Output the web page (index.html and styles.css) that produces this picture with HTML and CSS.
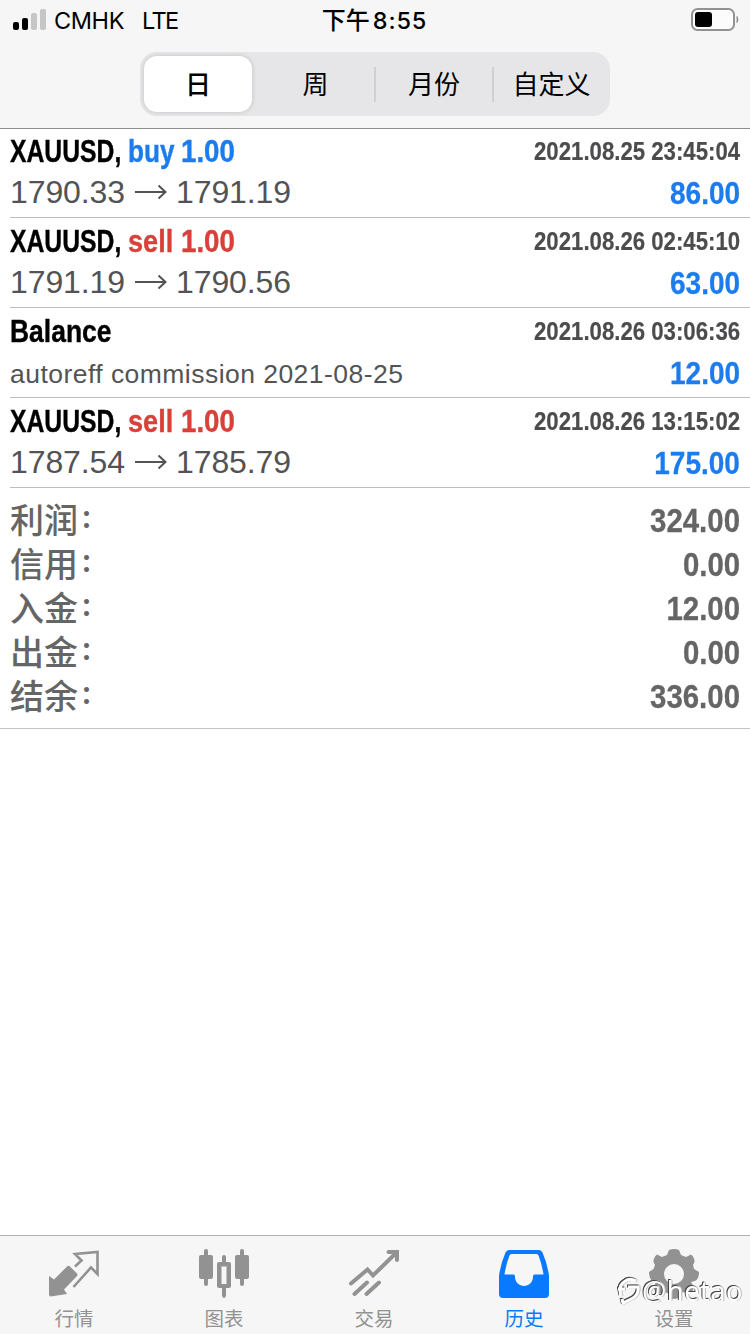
FILE: index.html
```html
<!DOCTYPE html>
<html lang="zh-CN">
<head>
<meta charset="utf-8">
<title>历史</title>
<link rel="stylesheet" href="styles.css">
</head>
<body>
<div class="screen">
  <header class="top">
    <div class="status">
      <div class="carrier">
        <svg class="signal" width="33" height="22" viewBox="0 0 33 22"><rect x="0" y="13" width="6" height="8" rx="2"/><rect x="9" y="9" width="6" height="12" rx="2"/><g fill="#c6c6c6"><rect x="18" y="4" width="6" height="17" rx="2"/><rect x="27" y="0" width="6" height="21" rx="2"/></g></svg>
        <span class="operator">CMHK</span>
        <span class="network">LTE</span>
      </div>
      <div class="time"><span class="period">下午</span><span class="clock">8:55</span></div>
      <svg class="battery" width="48" height="24" viewBox="0 0 48 24"><rect x="1" y="1" width="42" height="21" rx="5.5" fill="#fcfcfc" stroke="#929292" stroke-width="2"/><rect x="4" y="4" width="17" height="15" rx="3"/><path d="M46 8.5q2 3 0 6z" fill="#929292" stroke="#929292"/></svg>
    </div>
    <nav class="segments">
      <span class="segment selected">日</span>
      <span class="segment">周</span>
      <span class="segment divided">月份</span>
      <span class="segment divided">自定义</span>
    </nav>
  </header>
  <main class="content">
    <section class="deals">
      <article class="deal">
        <div class="line"><div class="title"><span class="symbol">XAUUSD,</span><span class="side buy">buy</span><span class="volume buy">1.00</span></div><time class="date">2021.08.25 23:45:04</time></div>
        <div class="line second"><div class="prices">1790.33<svg class="arrow" viewBox="0 0 32 16"><path d="M0 8H30M23.500 1.500L30.500 8L23.500 14.500"/></svg>1791.19</div><span class="profit">86.00</span></div>
      </article>
      <article class="deal">
        <div class="line"><div class="title"><span class="symbol">XAUUSD,</span><span class="side sell">sell</span><span class="volume sell">1.00</span></div><time class="date">2021.08.26 02:45:10</time></div>
        <div class="line second"><div class="prices">1791.19<svg class="arrow" viewBox="0 0 32 16"><path d="M0 8H30M23.500 1.500L30.500 8L23.500 14.500"/></svg>1790.56</div><span class="profit">63.00</span></div>
      </article>
      <article class="deal">
        <div class="line"><div class="title"><span class="symbol balance">Balance</span></div><time class="date">2021.08.26 03:06:36</time></div>
        <div class="line second"><div class="comment">autoreff commission 2021-08-25</div><span class="profit">12.00</span></div>
      </article>
      <article class="deal">
        <div class="line"><div class="title"><span class="symbol">XAUUSD,</span><span class="side sell">sell</span><span class="volume sell">1.00</span></div><time class="date">2021.08.26 13:15:02</time></div>
        <div class="line second"><div class="prices">1787.54<svg class="arrow" viewBox="0 0 32 16"><path d="M0 8H30M23.500 1.500L30.500 8L23.500 14.500"/></svg>1785.79</div><span class="profit">175.00</span></div>
      </article>
    </section>
    <section class="summary">
      <div class="total"><span class="label">利润<span class="colon">：</span></span><span class="amount">324.00</span></div>
      <div class="total"><span class="label">信用<span class="colon">：</span></span><span class="amount">0.00</span></div>
      <div class="total"><span class="label">入金<span class="colon">：</span></span><span class="amount">12.00</span></div>
      <div class="total"><span class="label">出金<span class="colon">：</span></span><span class="amount">0.00</span></div>
      <div class="total"><span class="label">结余<span class="colon">：</span></span><span class="amount">336.00</span></div>
    </section>
  </main>
  <footer class="tabs">
    <div class="tab">
      <svg class="icon" viewBox="0 0 50 50"><path fill="currentColor" d="M0 27L5 30.500L18 17.500Q19.500 16 21 17.500L28 24.500Q29 26 28 27L15 40.500L18 45L1.500 47.500Q0 47 0 45.500Z"/><path fill="none" stroke="currentColor" stroke-width="2.600" d="M26 17.500L32.500 11.500L26 5L48.500 3V25L42 18.500L24.500 38"/></svg>
      <span>行情</span>
    </div>
    <div class="tab">
      <svg class="icon" viewBox="0 0 50 50" fill="currentColor"><rect x="0" y="6" width="14" height="24" rx="2"/><rect x="5" y="0" width="4" height="37" rx="2"/><rect x="36" y="6" width="14" height="24" rx="2"/><rect x="41" y="0" width="4" height="37" rx="2"/><path fill-rule="evenodd" d="M20 13H30Q32 13 32 15V37Q32 39 30 39H20Q18 39 18 37V15Q18 13 20 13ZM22.500 17.500V35H27.500V17.500Z"/><rect x="23" y="6" width="4" height="9" rx="2"/><path d="M23 38h4v9q-2 4-4 0z"/></svg>
      <span>图表</span>
    </div>
    <div class="tab">
      <svg class="icon" viewBox="0 0 50 50" fill="none" stroke="currentColor" stroke-width="4"><path stroke-linecap="round" d="M2 34.500L18.500 20.500L24 26.500L46 5M5.500 45L18 33.500M17.500 45L30 33.500"/><path stroke-linecap="round" d="M39.500 3H48V11"/></svg>
      <span>交易</span>
    </div>
    <div class="tab active">
      <svg class="icon" viewBox="0 0 50 50"><path fill="currentColor" fill-rule="evenodd" d="M10 1H40Q42.500 1 43.500 3.500Q48.500 15 50 27V45Q50 49 46 49H4Q0 49 0 45V27Q1.500 15 6.500 3.500Q7.500 1 10 1ZM12.500 5Q11 5 10.500 6.500Q7 15 5.500 25.500H14.500Q16 25.500 16 27.500C16 40 34 40 34 27.500Q34 25.500 35.500 25.500H44.500Q43 15 39.500 6.500Q39 5 37.500 5Z"/></svg>
      <span>历史</span>
    </div>
    <div class="tab">
      <svg class="icon" viewBox="0 0 50 50"><path fill="currentColor" fill-rule="evenodd" d="M20 1Q25 -1 30 1L32 6L37 8L42 5.500Q45.500 8 45.500 13L44 16L45 20L50 23Q50 30 46 32L42 33L45 38Q44 43 40 45L35 43L31 44L29 49Q25 51 20.500 49L18.500 44L14.500 43L9 45Q5 43 4.500 38L7 33L4 32Q0 30 0 23L4.500 20L6 16L4.500 13Q4.500 8 8 5.500L13 8L18 6ZM25 15A10 10 0 1 0 25 35A10 10 0 1 0 25 15Z"/></svg>
      <span>设置</span>
      <div class="watermark"><svg width="24" height="30" viewBox="0 0 24 30"><path d="M5 20Q2 10 8 6Q13 1 20 5M2 13H9M12 11H22Q23 18 17 22Q13 24 7 27L6 23"/></svg><b>@hetao</b></div>
    </div>
  </footer>
</div>
</body>
</html>
```
FILE: styles.css
```css
* { box-sizing: border-box; }
body { margin: 0; background: #fff; font-family: "Liberation Sans", "Noto Sans CJK SC", sans-serif; }
.screen { width: 750px; height: 1334px; display: flex; flex-direction: column; overflow: hidden; }
.top { height: 129px; background: #f6f6f6; border-bottom: 1px solid #8d8d8f; flex: none; }

.status { height: 40px; display: grid; grid-template-columns: 1fr auto 1fr; align-items: center; padding: 0 11px 0 13px; font: 23.5px/40px Inter, "Noto Sans CJK SC", sans-serif; }
.carrier { display: flex; align-items: center; height: 40px; }
.carrier span { position: relative; top: 1px; }
.signal { margin-right: 8px; }
.operator { width: 88px; letter-spacing: -.4px; }
.network { letter-spacing: -1.6px; }
.time { display: flex; font-weight: 500; height: 40px; margin-left: -3px; }
.period { width: 51px; font-size: 24px; padding-top: 1px; }
.clock { font-weight: 500; font-size: 23.500px; letter-spacing: .9px; padding-top: 1px; }
.battery { justify-self: end; margin-top: -1px; }

.segments { width: 470px; height: 64px; margin: 12px 0 0 140px; padding: 4px; border-radius: 17px; background: #e6e6e8; display: grid; grid-template-columns: 108px 127px 110px 117px; align-items: center; font: 26px/54px "Noto Sans CJK SC", sans-serif; }
.segment { height: 56px; text-align: center; position: relative; }
.segment.selected { background: #fff; border-radius: 13px; box-shadow: 0 0 5px rgba(0, 0, 0, .16); font-weight: 500; }
.segment.divided::before { content: ""; position: absolute; left: -5px; top: 11px; width: 2px; height: 35px; background: #d0d0d3; }
.segment.divided:last-child { margin-left: 4px; margin-right: -4px; }
.segment.divided:last-child::before { left: -1px; }

.content { flex: 1; }
.deals { padding-left: 10px; }
.deal { height: 90px; border-bottom: 1px solid #bdbdbf; padding: 3px 10px 0 0; }
.deal:first-child { height: 89px; padding-top: 2px; }
.line { height: 40px; display: flex; justify-content: space-between; align-items: center; line-height: 40px; white-space: nowrap; }
.line.second { height: 42px; }
.title { display: flex; font-size: 31.500px; font-weight: bold; -webkit-text-stroke: .4px currentColor; }
.symbol { width: 118px; transform: scaleX(.785); transform-origin: left; }
.symbol.balance { transform: scaleX(.84); }
.side { width: 53px; transform: scaleX(.83); transform-origin: left; }
.side.sell { transform: scaleX(.86); }
.volume { width: 60px; transform: scaleX(.88); transform-origin: left; }
.buy, .profit { color: #1c7ced; }
.sell { color: #d8413a; }
.date { font-size: 25px; font-weight: bold; color: #4c4c4e; transform: scaleX(.888); transform-origin: right; -webkit-text-stroke: .2px currentColor; }
.prices { display: flex; align-items: center; font-size: 32px; color: #535355; letter-spacing: -.1px; }
.arrow { width: 32px; height: 16px; margin: 0 9px 1px 10px; fill: none; stroke: #535355; stroke-width: 2; }
.comment { font-size: 26.500px; color: #535355; padding-top: 4px; letter-spacing: .46px; font-variant-ligatures: none; }
.profit { font-size: 32px; font-weight: bold; transform: scaleX(.875); transform-origin: right; padding-top: 2px; -webkit-text-stroke: .3px currentColor; }

.summary { height: 241px; padding: 10px 10px 0; border-bottom: 1px solid #c4c4c6; color: #656565; }
.total { height: 44px; display: flex; justify-content: space-between; line-height: 44px; }
.label { display: flex; font: 500 34px/42px "Noto Sans CJK SC", sans-serif; }
.colon { width: 26px; height: 42px; margin: -2px 0 0 2px; font-size: 26px; font-weight: bold; }
.amount { font-size: 34px; font-weight: bold; transform: scaleX(.865); transform-origin: right; -webkit-text-stroke: .3px currentColor; }

.tabs { height: 99px; flex: none; display: grid; grid-template-columns: repeat(5, 150px); margin-left: -1px; background: #f6f6f6; border-top: 1px solid #b2b2b2; margin-right: -1px; }
.tab { position: relative; display: flex; flex-direction: column; align-items: center; padding-top: 13px; color: #929292; font: 19.500px/28px "Noto Sans CJK SC", sans-serif; }
.tab.active { color: #097aff; }
.icon { width: 50px; height: 50px; margin-bottom: 5px; flex: none; }
.watermark { position: absolute; left: 17px; top: 39px; width: 130px; height: 32px; display: flex; align-items: center; color: #fff; font: 27px/32px "Noto Sans", sans-serif; filter: drop-shadow(-1px -1px 0 #444) drop-shadow(1px 0 0 #bbb); }
.watermark svg { fill: none; stroke: #fff; stroke-width: 3; flex: none; margin-right: 2px; }
.watermark b { font-weight: 400; letter-spacing: .6px; }
```
